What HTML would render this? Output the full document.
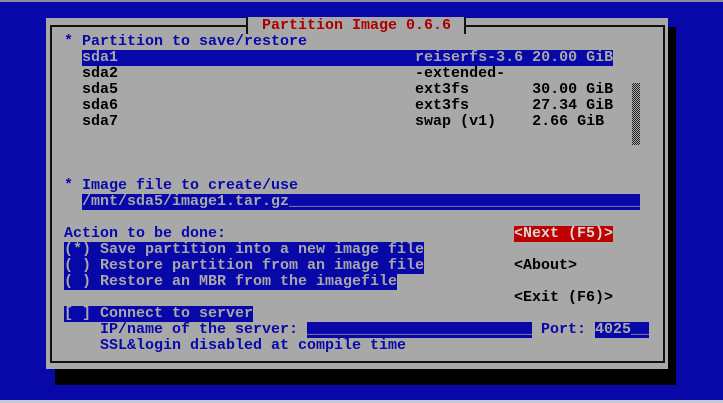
<!DOCTYPE html>
<html><head><style>
html,body{margin:0;padding:0;width:723px;height:403px;overflow:hidden;background:#0808a8;}
.a{position:absolute;}
.t{position:absolute;font-family:"Liberation Mono",monospace;font-weight:bold;font-size:15px;line-height:16px;height:16px;white-space:pre;color:#0808a8;}
.k{color:#000;}
.h{background:#0808a8;color:#a8a8a8;}
</style></head><body>
<div class="a" style="left:0;top:0;width:723px;height:2px;background:#8a8aa0"></div>
<div class="a" style="left:0;top:400px;width:723px;height:3px;background:#c8c8d8"></div>
<div class="a" style="left:55px;top:27px;width:621px;height:358px;background:#000"></div>
<div class="a" style="left:46px;top:18px;width:622px;height:351px;background:#a8a8a8"></div>
<div class="a" style="left:50px;top:25px;width:611px;height:334px;border:2px solid #111"></div>
<div class="a" style="left:246px;top:17px;width:216px;height:17px;background:#a8a8a8;border-left:2px solid #111;border-right:2px solid #111"></div>
<div class="t" style="left:262px;top:18px;color:#a80000">Partition Image 0.6.6</div>

<div class="t" style="left:64px;top:34px">* Partition to save/restore</div>
<div class="t h" style="left:82px;top:50px;width:531px">sda1                                 reiserfs-3.6 20.00 GiB</div>
<div class="t k" style="left:82px;top:66px">sda2                                 -extended-</div>
<div class="t k" style="left:82px;top:82px">sda5                                 ext3fs       30.00 GiB</div>
<div class="t k" style="left:82px;top:98px">sda6                                 ext3fs       27.34 GiB</div>
<div class="t k" style="left:82px;top:114px">sda7                                 swap (v1)    2.66 GiB</div>
<div class="a" style="left:632px;top:83px;width:8px;height:62px;background:repeating-conic-gradient(#222 0 25%,#a8a8a8 0 50%) 0 0/2px 2px"></div>

<div class="t" style="left:64px;top:178px">* Image file to create/use</div>
<div class="t h" style="left:82px;top:194px;width:558px">/mnt/sda5/image1.tar.gz_______________________________________</div>

<div class="t" style="left:64px;top:226px">Action to be done:</div>
<div class="t h" style="left:64px;top:242px;width:360px">(*) Save partition into a new image file</div>
<div class="t h" style="left:64px;top:258px;width:360px">( ) Restore partition from an image file</div>
<div class="t h" style="left:64px;top:274px;width:333px">( ) Restore an MBR from the imagefile</div>

<div class="t h" style="left:64px;top:306px;width:189px">[ ] Connect to server</div>
<div class="t" style="left:100px;top:322px">IP/name of the server: </div>
<div class="t h" style="left:307px;top:322px;width:225px">_________________________</div>
<div class="t" style="left:532px;top:322px"> Port: </div>
<div class="t h" style="left:595px;top:322px;width:54px">4025__</div>
<div class="t" style="left:100px;top:338px">SSL&amp;login disabled at compile time</div>

<div class="t" style="left:514px;top:226px;background:#c00000;color:#d8d8d8">&lt;Next (F5)&gt;</div>
<div class="t k" style="left:514px;top:258px">&lt;About&gt;</div>
<div class="t k" style="left:514px;top:290px">&lt;Exit (F6)&gt;</div>
</body></html>
